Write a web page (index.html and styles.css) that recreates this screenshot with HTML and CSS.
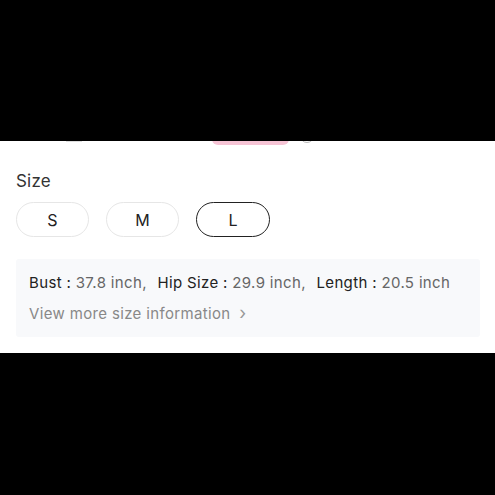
FILE: index.html
```html
<!DOCTYPE html>
<html lang="en">
<head>
    <meta charset="UTF-8">
    <meta name="viewport" content="width=device-width, initial-scale=1.0">
    <title>Size</title>
    <link rel="stylesheet" href="styles.css">
</head>
<body>
    <div class="top-gap"></div>
    <div class="panel">
        <div class="peek-row">
            <span class="peek-thumb"></span>
            <span class="peek-pill"></span>
            <span class="peek-dot"></span>
        </div>

        <div class="label">Size</div>
        <div class="sizes">
            <button class="size">S</button>
            <button class="size">M</button>
            <button class="size active">L</button>
        </div>

        <div class="info">
            <div class="measures">
                <span class="key">Bust :</span> <span class="val">37.8 inch,</span>
                <span class="key">Hip Size :</span> <span class="val">29.9 inch,</span>
                <span class="key">Length :</span> <span class="val last">20.5 inch</span>
            </div>
            <div class="more">View more size information <span class="chev">&#8250;</span></div>
        </div>
    </div>
</body>
</html>
```

FILE: styles.css
```css
body {
    margin: 0;
    background: #000;
    font-family: Inter, "Open Sans", sans-serif;
}
.top-gap {
    height: 141px;
}
.panel {
    background: #fff;
    padding: 0 15px 16px 16px;
    overflow: hidden;
}
.peek-row {
    position: relative;
    height: 4px;
}
.peek-pill {
    position: absolute;
    left: 196px;
    top: -20px;
    width: 77px;
    height: 24px;
    border-radius: 6px;
    background: #f6c4d5;
}
.peek-dot {
    position: absolute;
    left: 284px;
    top: -12px;
    width: 12px;
    height: 12px;
    border: 1px solid #bbb;
    border-radius: 50%;
}
.peek-thumb {
    position: absolute;
    left: 50px;
    top: -10px;
    width: 16px;
    height: 10px;
    border-bottom: 1px solid #ddd;
}
.label {
    margin-top: 25px;
    font-size: 17px;
    line-height: 22px;
    letter-spacing: 0.2px;
    color: #333;
}
.sizes {
    display: flex;
    gap: 17px;
    margin-top: 10px;
}
.size {
    width: 73px;
    height: 35px;
    border: 1px solid #e6e6e6;
    border-radius: 18px;
    background: #fff;
    font-family: inherit;
    font-size: 16px;
    color: #222;
    padding: 0;
}
.size.active {
    border: 1.5px solid #222;
    width: 74px;
}
.info {
    margin-top: 22px;
    background: #f8f9fb;
    border-radius: 3px;
    padding: 13px 13px 12px 13px;
}
.measures {
    font-size: 15px;
    line-height: 22px;
    letter-spacing: 0.35px;
    white-space: nowrap;
}
.key {
    color: #222;
}
.val {
    color: #666;
    margin-right: 6px;
}
.val.last {
    margin-right: 0;
}
.more {
    margin-top: 8px;
    font-size: 15px;
    line-height: 22px;
    letter-spacing: 0.35px;
    color: #888;
}
.chev {
    font-size: 18px;
    margin-left: 4px;
    color: #999;
}
```
